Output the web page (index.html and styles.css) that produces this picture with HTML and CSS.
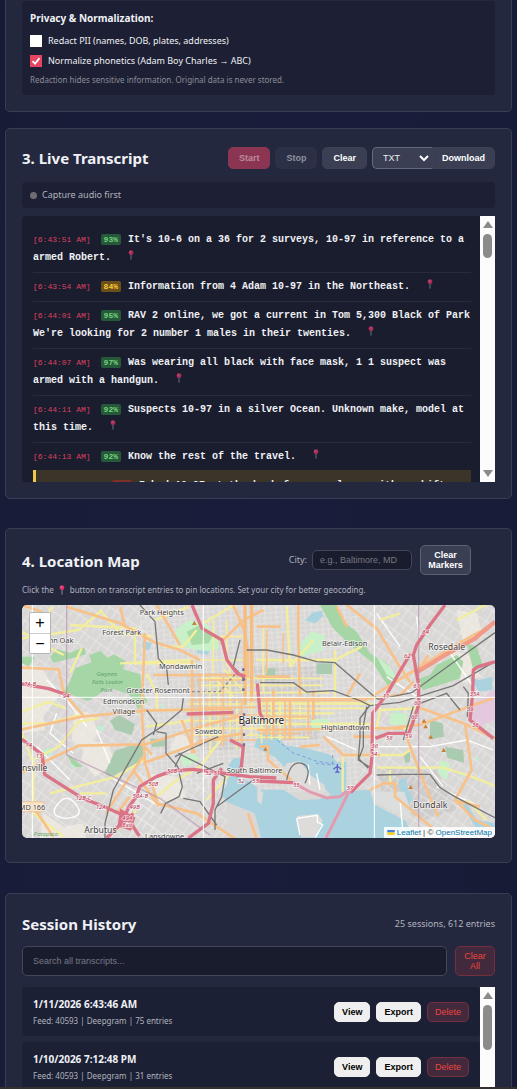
FILE: index.html
```html
<!DOCTYPE html>
<html lang="en">
<head>
<meta charset="utf-8">
<meta name="viewport" content="width=device-width, initial-scale=1">
<title>Live Transcript</title>
<link rel="stylesheet" href="styles.css">
</head>
<body>
<svg class="defs" aria-hidden="true">
  <symbol id="pin" viewBox="0 0 8 12">
    <path d="M4 5v6.5" stroke="#9aa3b5" stroke-width="1" fill="none"/>
    <circle cx="4" cy="3.2" r="2.9" fill="#e0316a"/>
    <circle cx="3.2" cy="2.3" r=".8" fill="#f58bb0"/>
  </symbol>
</svg>
<main class="page">
  <section class="card card-first">
    <div class="panel privacy">
      <h3 class="privacy-title">Privacy &amp; Normalization:</h3>
      <label class="check"><input type="checkbox">Redact PII (names, DOB, plates, addresses)</label>
      <label class="check"><input type="checkbox" checked>Normalize phonetics (Adam Boy Charles → ABC)</label>
      <p class="note">Redaction hides sensitive information. Original data is never stored.</p>
    </div>
  </section>

  <section class="card card-transcript">
    <header class="card-head">
      <h2>3. Live Transcript</h2>
      <div class="tools">
        <button class="btn start" disabled>Start</button>
        <button class="btn stop" disabled>Stop</button>
        <button class="btn">Clear</button>
        <div class="export">
          <div class="select-wrap">
            <select aria-label="Format"><option>TXT</option><option>JSON</option></select>
            <svg class="chevron" viewBox="0 0 10 7"><path d="M1 1l4 4 4-4" fill="none" stroke="#fff" stroke-width="2"/></svg>
          </div>
          <button class="btn download">Download</button>
        </div>
      </div>
    </header>
    <div class="panel status"><span class="dot"></span>Capture audio first</div>
    <div class="scroller transcript">
      <div class="lines">
        <p class="line"><time>[6:43:51 AM]</time><span class="conf">93%</span>It's 10-6 on a 36 for 2 surveys, 10-97 in reference to a armed Robert.<button class="pin" aria-label="Pin"><svg><use href="#pin"/></svg></button></p>
        <p class="line"><time>[6:43:54 AM]</time><span class="conf mid">84%</span>Information from 4 Adam 10-97 in the Northeast.<button class="pin" aria-label="Pin"><svg><use href="#pin"/></svg></button></p>
        <p class="line"><time>[6:44:01 AM]</time><span class="conf">95%</span>RAV 2 online, we got a current in Tom 5,300 Black of Park We're looking for 2 number 1 males in their twenties.<button class="pin" aria-label="Pin"><svg><use href="#pin"/></svg></button></p>
        <p class="line"><time>[6:44:07 AM]</time><span class="conf">97%</span>Was wearing all black with face mask, 1 1 suspect was armed with a handgun.<button class="pin" aria-label="Pin"><svg><use href="#pin"/></svg></button></p>
        <p class="line"><time>[6:44:11 AM]</time><span class="conf">92%</span>Suspects 10-97 in a silver Ocean. Unknown make, model at this time.<button class="pin" aria-label="Pin"><svg><use href="#pin"/></svg></button></p>
        <p class="line last"><time>[6:44:13 AM]</time><span class="conf">92%</span>Know the rest of the travel.<button class="pin" aria-label="Pin"><svg><use href="#pin"/></svg></button></p>
        <p class="line flagged"><time>[6:44:18 AM]</time><span class="conf low">68%</span>I had 10-97 at the back for you please with a shift</p>
      </div>
      <div class="bar" aria-hidden="true"><i class="up"></i><i class="thumb"></i><i class="down"></i></div>
    </div>
  </section>

  <section class="card card-map">
    <header class="card-head map-head">
      <h2>4. Location Map</h2>
      <div class="map-tools">
        <label for="city">City:</label>
        <input id="city" class="field" type="text" placeholder="e.g., Baltimore, MD">
        <button class="btn outlined">Clear<br>Markers</button>
      </div>
    </header>
    <p class="hint">Click the <svg class="hint-pin"><use href="#pin"/></svg> button on transcript entries to pin locations. Set your city for better geocoding.</p>
    <div class="map">
      <svg class="map-canvas" viewBox="66 15 1419 699" preserveAspectRatio="xMidYMid slice" role="img" aria-label="Map of Baltimore">
        <defs>
          <pattern id="streets" width="34" height="30" patternUnits="userSpaceOnUse" patternTransform="rotate(-4)">
            <path d="M0 5H34M0 19H20M8 0V30M25 5V30" stroke="#ecebe9" stroke-width="2" fill="none"/>
          </pattern>
          <pattern id="diag" width="42" height="36" patternUnits="userSpaceOnUse" patternTransform="rotate(35)">
            <path d="M0 8H42M12 0V36M30 8V28" stroke="#eeedeb" stroke-width="2" fill="none"/>
          </pattern>
        </defs>
        <rect x="0" y="0" width="1600" height="800" fill="#dad8d6"/>
        <g fill="#ebe7df">
          <path d="M66 190l60 10 50 90-50 60-60-20zM225 330l50 10 20 60-40 50-40-30zM66 330l60 0 10 60-70 10zM255 420l70 10 20 60-60 40-40-50zM530 400l60 20-20 40-60-10zM1360 150l60 20 20 60-50 20-40-40zM1370 30l60 10 20 70-60 20zM450 520l80 10 30 60-80 20zM130 640l60 40 60-10 10 44H120z"/>
        </g>
        <g fill="#cfcdcc"><path d="M560 220h170v230H600zM760 200h200v220H790zM1130 500l180 10 60 120-100 30-120-60z"/></g>
        <rect x="66" y="15" width="400" height="700" fill="url(#diag)"/>
        <rect x="420" y="15" width="660" height="560" fill="url(#streets)"/>
        <rect x="1080" y="15" width="410" height="700" fill="url(#diag)"/>
        <rect x="380" y="520" width="300" height="200" fill="url(#diag)"/>
        <g fill="#a6d6a6">
          <path d="M205 255l20-50 50-18-8-22 35-12 20 20 20-10 35 20-8 25 52 15 4 50 18 30-28 25-28-45-60-20-62 40-55-20-20-5z"/>
          <path d="M150 170l20-22 40 10 42-16 6 20-38 12-60 14zM66 170l40 0-20 30-20-10zM200 460l50 40-30 2z"/>
          <path d="M960 15h50l20 50 40 30 40 65 50 30 40 50-36 18-46-70-70-55-50-50z"/>
          <path d="M1260 235l30-10 20-30 60-30 20 20-10 50-60 20-50 15-20-20z"/>
          <path d="M1400 130l30 10 20 60-30 10z"/>
        </g>
        <g fill="#c8f1c9">
          <path d="M530 85l40-25 50 12 35 45 2 30-50 10-60-18-20-30z"/>
          <path d="M890 145l45-52 40 14-6 45-65 18zM935 357h52v36h-52zM1130 170l40 30 30 45-40-20zM540 470l40-10 20 20-50 20zM1170 340h50v34h-50zM1320 480l30 10-10 50-26-20z"/>
        </g>
        <path d="M560 95l40-20 40 30-14 25-50 5z" fill="#a9dba8"/>
        <g fill="#aacbaf">
          <path d="M330 362l28-17 47 28-10 32-50-15zM345 452l70-22 24 12-18 42-90 48-17-12zM451 415l44 4v20l-40 2zM950 190h46v32h-46zM798 205h28v36h-28zM1290 360l38 10 4 40-42 8zM1335 440l55 10 2 38-50-14zM1210 460l20-4v30l-14 2z"/>
        </g>
        <g fill="#bdf0d2"><path d="M130 450l20-8 4 20-18 6zM292 376l20 4-2 12-18-4zM210 490l16 8-8 10zM1180 330l20 4-4 12zM1370 520l20-6 4 16zM1420 470l16 4-4 10zM1250 110l26 6-10 12zM620 350l16 4-6 12zM480 310l14 6-6 14z"/></g>
        <path d="M1420 310l65-40v90l-50 20-20-30z" fill="#e3c8de"/>
        <g fill="#aad3df">
          <path d="M686 495l14-20 22-2 10 30-16 40 26-2 38 28 70 0 50 32 60-4 42-16 38-8 70-4 12 44 96 50 18 51H784l-20-74-84-34-16-24 18-32z"/>
          <path d="M775 398l50 2 30 36 70 10 66 18 20 22 28 0v90l-40 14-30-30-50-24-66-36-30-30-60-30z"/>
          <path d="M916 62l20-24 30-6 4 16-24 22zM428 122l28 8-10 22-20-10zM590 150l40 4-8 10-30-4zM1407 230l30 10 40-10v40l-40 5zM1196 540l22-6 8 40 14 20-20 30-16-30zM1380 600l20 10 30 50 55 10v20l-60-10z"/>
        </g>
        <path d="M1125 605l96 50 12-20-20-60-88 0z" fill="#dcdddd"/>
        <g fill="#dedcda"><path d="M860 490l40-6 30 40 44 32 2 20-20 10-60-26-60-10zM890 648l64-6 14 20-24 50h-40zM772 560l18 20-6 34-12-10z"/></g>
        <path d="M890 655l62-9v20l16 8-22 38M890 655l10 50M925 494l4 60M950 520l10 50" fill="none" stroke="#fff" stroke-width="4"/>
        <path d="M818 410l60 48 70 25 60 10M998 465v30l-50-5" fill="none" stroke="#6a80dd" stroke-width="2" stroke-dasharray="10 8"/>
        <g fill="none" stroke="#fff" stroke-width="4">
          <path d="M140 240l60 60 60 80M170 340l-20 60 70 60M290 390l40 100M175 610q25-30 50 0t0 40-50 0 0-40M110 440l100 100M330 530l150 90M1130 40l70 100M1250 50l10 80M1130 440h160l110-20 80 30M1260 470l70 90M1160 230l90 60M1310 560l130 60M1200 600l10 110M980 410l90 40M1330 130l90 130"/>
        </g>
        <g fill="none" stroke="#f3ee9d" stroke-width="7">
          <path d="M66 95l75 45 50 25M66 115l170-25 70-60M130 55l30-35M210 75l200 10M210 220l35-75M66 400l30 80 80-40 60-75 60-10M66 335l80-30 50 20M100 480v160l90 70M66 370h80l90-25M150 580l200-50 90-55M300 30l60 70 100 10M405 110v80h180M360 190l220-10M440 220l30 60v50h120M440 380l140-20M490 140l60 0 40-50M610 70l100-60M466 60l100-40M470 590l60-50 70-40 70-90M240 580l80 0M620 600l80-90M350 690l60-60"/>
          <path d="M771 180h240M1005 150v150M1005 180l80-40M860 20l10 180M940 120l-70 80M771 340h230M780 372h330M790 310h320M840 290v130M870 290v130M1028 470v105M1028 465l110 0 70 0 30-20M1130 503l200 0 80 25 75 30M1140 330l110-5-20 60-100 0zM1370 60l115-60M1170 510v45M1400 600l60 60M1140 60l60-20"/>
        </g>
        <g stroke="#f6ec9b" stroke-width="5" fill="none">
          <path d="M600 235h370M600 256h370M610 278h380M560 312h560M570 362h230M570 385h230M575 405h210M780 325h320M770 355h160M770 412h160M630 240v220M655 230v200M690 200v200M710 300v150M755 210v200M785 300v130M815 290v130M900 300v60M640 230l60 60M670 205l70 80M640 60v160M680 60v140M790 80v200M600 180h130M640 110h90"/>
        </g>
        <g fill="none" stroke="#f7c189" stroke-width="5">
          <path d="M570 300h210M590 322h180M575 345h200M600 420h170M590 240h150M600 220v220M670 230v210M725 300v130M800 290v130M855 300v120M925 300v110M780 302h320M780 350h150M780 400h120M800 90v130M850 100v90"/>
        </g>
        <g fill="none" stroke="#f7c189" stroke-width="8">
          <path d="M66 203l110 5 15 70 60 70M66 388l180-38 190-18 260-6M66 517l170-80 190-4 30 30M200 20l160 50 100 55 80 25 60 30M360 20l15 60M435 100l-10 230 10 160 20 60 20 70M430 435l190-60 110-30M430 490l190-70 110-20M470 15l70 120M460 225h280M576 180v280M545 360l40 100M318 640l110-170M100 620l60 90M400 510l70 100 120 30 120 80M350 640l40-50M700 15l34 80 10 60 0 80M660 130l70-70 60-30"/>
          <path d="M771 80h70M895 15v100l5 180M1010 20l30 60M1040 15l90 70 60 100 40 60M771 295h350l80-10 40-40M771 390l400-6 90-10 120-45 100-35M1130 385l80 0M820 270v140M940 270v90M771 230h100M780 440l24 0v40l70 60M1110 570l40-20 35 0 0 40 60 50 70 60M1215 400l50 130 50 120M1250 320l140 50 95 45M1395 370l20 140-50 90 60 60 60 30M1485 70l-110 60-130 80-130 80M870 300v120M970 410l60 55h110M900 440l60-5M1060 410l70 0M1360 600l80 20M1245 225l40-60"/>
          <path d="M744 640l25 74M66 15l60 20M1080 220l-40 70"/>
        </g>
        <path d="M735 15v300M755 15v290" stroke="#f5bd80" stroke-width="10" fill="none"/>
        <path d="M1245 220l90-55 90-50 60-50" fill="none" stroke="#ef9b88" stroke-width="13"/>
        <g fill="none" stroke="#777" stroke-width="4">
          <path d="M420 15l45 50 10 110 25 30 5 50M550 295l-5 35-60 50-60 40-85 150-25 100v50M440 330l30 40-10 35M470 395l28 5v60l35 40 14 60-10 30-40 20-15 30M535 460l60 30 80 40-10 60-20 40v60M525 470l40-20 90-40M525 500l20-40M550 595l50 10 50 70M720 120l-20 80 35 40M590 520l80-30M650 620l110-80"/>
          <path d="M740 150l60 0 80 15 70 20 55 3 110 95 20 15 100-20 110-80 140-100M780 248h100l40 28 80-4 80 30 30 15 90-10 160-50 120-70M1110 315l-30 40 0 60-5 60 30 30M1100 320l-10 60 0 60-15 40 40 25M1130 525l80-2 80 0 30 40 50 30 115 60M1240 320l-30 100M1260 310l80-30 40 50M860 540q12-60 45-50t10 60M1390 260l15 20-3 70"/>
        </g>
        <path d="M560 275h100l60-70" stroke="#8c8c8c" stroke-width="4" stroke-dasharray="8 8" fill="none"/>
        <path d="M200 15v450l280 130 150 110M1256 15v700" stroke="#b488ad" stroke-width="4" opacity=".6" fill="none"/>
        <g fill="none" stroke="#db7487" stroke-width="10" stroke-linejoin="round">
          <path d="M576 15l30 70 60 35 15 60 30 40 25 10M66 252l80 14 65 22M560 342l140-5M66 418l60 45 8 60 110 70 70 28 50 22 24 20 30 45M320 714l45-44 22-50 22-30 10-30 50-30 50-18 60-4 110 14 60 8 80 4M690 420l40 20-6 60-16 30M665 505l-25 35 0 70-15 60-60 44M400 640l-40 40"/>
          <path d="M1335 15l-45 60-40 60-10 30 16 90 0 60-20 60-10 25-60 0-40 15M1232 160l-30 50-40 70-44 60-2 130-6 50-58 58M880 548l-110-5M1485 185l-50 15-15 10-2 70-8 80 70 55M772 250l8 90 10 20"/>
        </g>
        <path d="M880 548l50 28 50 18 40-4 35-28M1050 568l-36 74-36 72" fill="none" stroke="#e39bae" stroke-width="9"/>
        <path d="M365 635l34 20-10 30-30-10z" fill="none" stroke="#db7487" stroke-width="12"/>
        <path d="M730 205v90M732 340v100" stroke="#6a6e9e" stroke-width="7" stroke-dasharray="8 22" fill="none"/>
        <g fill="#c87f3a"><path d="M583 62l7 13h-14zM1272 356l7 12h-14zM1277 373l7 12h-14zM1292 404l7 12h-14zM1331 444l7 12h-14zM1232 555l7 12h-14zM796 440l6 12h-12z"/></g>
        <path d="M1012 492v26M1000 508l12-9 12 9M1006 518l6-4 6 4" stroke="#6a63c9" stroke-width="4" fill="none"/>
        <path d="M97 15v700M610 15v700M1123 15v700M66 292h1420" stroke="#fff" stroke-width="3" fill="none"/>
        <rect x="60" y="605" width="72" height="30" rx="4" fill="#fbe0c0" stroke="#e5b88b" stroke-width="2"/>
        <g class="map-label minor" text-anchor="middle">
          <text x="485" y="46">Park Heights</text>
          <text x="365" y="104">Forest Park</text>
          <text x="183" y="130">nn Oak</text>
          <text x="542" y="206">Mondawmin</text>
          <text x="474" y="279">Greater Rosemont</text>
          <text x="371" y="313">Edmondson</text>
          <text x="372" y="342">Village</text>
          <text x="626" y="401">Sowebo</text>
          <text x="764" y="519">South Baltimore</text>
          <text x="1034" y="139">Belair-Edison</text>
          <text x="1036" y="389">Highlandtown</text>
          <text x="494" y="716">Lansdowne</text>
          <text x="96" y="629">MD 166</text>
        </g>
        <g class="map-label town" text-anchor="middle">
          <text x="104" y="512">nsville</text>
          <text x="301" y="698">Arbutus</text>
          <text x="1340" y="151">Rosedale</text>
          <text x="1291" y="624">Dundalk</text>
        </g>
        <text class="map-label city" x="784" y="371" text-anchor="middle">Baltimore</text>
        <g class="map-label park" text-anchor="middle">
          <text x="320" y="228">Gwynns</text><text x="322" y="252">Falls Leakin</text><text x="320" y="276">Park</text><text x="138" y="708">Patapsco</text>
        </g>
        <g class="map-label exit" text-anchor="middle">
          <text x="90" y="259">7A-B</text><text x="86" y="440">14</text><text x="117" y="474">13</text><text x="250" y="600">12B-C</text><text x="302" y="628">12A</text><text x="382" y="660">49A</text><text x="382" y="682">Exit</text><text x="404" y="626">49B</text><text x="421" y="595">50A-B</text><text x="460" y="559">50B</text><text x="524" y="519">50B-A</text><text x="638" y="526">52 51</text><text x="724" y="548">52</text><text x="767" y="550">55</text><text x="889" y="560">55</text><text x="1050" y="570">57</text><text x="1124" y="445">36</text><text x="1122" y="467">54</text><text x="1168" y="419">58</text><text x="1226" y="415">59</text><text x="1243" y="357">60</text><text x="1252" y="316">60</text><text x="1250" y="263">61</text><text x="1222" y="174">62</text><text x="1277" y="103">64</text><text x="1158" y="294">11</text><text x="1424" y="288">35A</text><text x="1411" y="332">39</text><text x="1426" y="380">38</text><text x="198" y="294">94</text>
        </g>
      </svg>
      <div class="zoomer"><button aria-label="Zoom in">+</button><button aria-label="Zoom out">−</button></div>
      <div class="credit"><svg class="flag" viewBox="0 0 12 8"><path fill="#4C7BE1" d="M0 0h12v4H0z"/><path fill="#FFD500" d="M0 4h12v3H0z"/><path fill="#E0BC00" d="M0 7h12v1H0z"/></svg> <a href="#leaflet">Leaflet</a> | © <a href="#osm">OpenStreetMap</a></div>
    </div>
  </section>

  <section class="card card-history">
    <header class="card-head history-head">
      <h2>Session History</h2>
      <span class="count">25 sessions, 612 entries</span>
    </header>
    <div class="search">
      <input class="field" type="search" aria-label="Search" placeholder="Search all transcripts...">
      <button class="btn danger">Clear<br>All</button>
    </div>
    <div class="scroller history">
      <div class="sessions">
        <article class="session">
          <div class="session-info"><h3>1/11/2026 6:43:46 AM</h3><p>Feed: 40593 | Deepgram | 75 entries</p></div>
          <div class="session-tools"><button class="btn light">View</button><button class="btn light">Export</button><button class="btn danger">Delete</button></div>
        </article>
        <article class="session">
          <div class="session-info"><h3>1/10/2026 7:12:48 PM</h3><p>Feed: 40593 | Deepgram | 31 entries</p></div>
          <div class="session-tools"><button class="btn light">View</button><button class="btn light">Export</button><button class="btn danger">Delete</button></div>
        </article>
      </div>
      <div class="bar tall" aria-hidden="true"><i class="up"></i><i class="thumb"></i><i class="down"></i></div>
    </div>
  </section>
</main>
<div class="edge"></div>
</body>
</html>
```
FILE: styles.css
```css
* { box-sizing: border-box; }
body {
  margin: 0;
  height: 100vh;
  overflow: hidden;
  background: linear-gradient(100deg, #171c36, #191d3b 50%, #161b35);
  color: #f0f1f5;
  font: 9px/12px "Noto Sans", "Open Sans", sans-serif;
}
h2, h3, p { margin: 0; }
button, input, select { font: 9px/10px "Liberation Sans", Arial, sans-serif; }
.defs { position: absolute; width: 0; height: 0; }

.page { padding: 0 5px; }
.card {
  padding: 16px;
  background: #24283f;
  border: 1px solid #3a3e54;
  border-radius: 5px;
}
.card-first { border-top: 0; border-radius: 0 0 5px 5px; padding-top: 1px; margin-bottom: 16px; }
.card-transcript { margin-bottom: 29px; }
.card-map { padding-bottom: 24px; margin-bottom: 30px; }
.panel { background: #1d2034; border-radius: 4px; }

.privacy { padding: 10px 8px; height: 94px; }
.privacy-title { font-size: 10px; line-height: 14px; margin-bottom: 9px; }
.check { display: flex; align-items: center; gap: 6px; height: 14px; margin-bottom: 6px; }
.check input {
  appearance: none;
  width: 12px;
  height: 12px;
  margin: 0;
  background: #fff;
}
.check input:checked {
  background: #e64562 url("data:image/svg+xml,%3Csvg xmlns='http://www.w3.org/2000/svg' viewBox='0 0 12 12'%3E%3Cpath d='M2.5 6.2l2.5 2.5 4.5-5.6' fill='none' stroke='white' stroke-width='1.8'/%3E%3C/svg%3E");
}
.note { font-size: 8px; line-height: 12px; color: #8b8c99; }

.card-head { display: flex; align-items: center; justify-content: space-between; }
.card-head h2 { font-size: 15px; line-height: 22px; }
.card-transcript .card-head { height: 26px; margin-bottom: 11px; }
.tools { display: flex; gap: 5px; }
.btn {
  padding: 0 10px;
  height: 22px;
  border: 1px solid #3d4156;
  border-radius: 5px;
  background: #3b3f54;
  color: #fff;
  font-weight: bold;
}
.btn.start { background: #8c3552; border-color: #8c3552; color: #bd8b9e; }
.btn.stop { background: #2c3047; border-color: #2c3047; color: #8d90a0; }
.export { display: flex; }
.select-wrap { position: relative; }
.select-wrap select {
  appearance: none;
  width: 60px;
  height: 22px;
  padding: 0 10px;
  border: 1px solid #656a7e;
  border-right: 0;
  border-radius: 5px 0 0 5px;
  background: #3b3f54;
  color: #f0f1f5;
}
.chevron { position: absolute; right: 3px; top: 8px; width: 10px; height: 7px; }
.btn.download { padding: 0 9px; border-radius: 0 5px 5px 0; }

.status { display: flex; align-items: center; gap: 5px; height: 26px; padding: 0 8px; margin-bottom: 8px; color: #b1b3be; }
.dot { width: 7px; height: 7px; border-radius: 50%; background: #6d6d70; }

.scroller { display: flex; overflow: hidden; }
.transcript { height: 266px; background: #1a1d2e; border-radius: 4px 0 0 4px; }
.lines { flex: 1; padding: 10px 9px 10px 11px; }
.line {
  padding: 5px 0;
  border-bottom: 1px solid #282b3c;
  font: bold 10px/18px "Liberation Mono", "Courier New", monospace;
}
.line time { margin-right: 10px; font-size: 8px; font-weight: normal; color: #dc4060; }
.conf {
  margin-right: 7px;
  padding: 1px 3px;
  border-radius: 2px;
  background: #26583a;
  color: #74d37c;
  font-size: 8px;
}
.conf.mid { background: #6b501a; color: #ffc935; }
.conf.low { background: #7d3025; color: #e8604e; }
.line.last { padding-bottom: 4px; border-bottom: 0; }
.line.flagged { padding: 7px 0 7px 8px; background: #3b3529; border-left: 3px solid #f2c744; }
.pin { margin: 0 0 0 16px; padding: 0; border: 0; background: none; opacity: .75; line-height: 10px; }
.pin svg { display: block; width: 8px; height: 10px; }

.bar { display: flex; flex-direction: column; align-items: center; width: 15px; padding: 5px 0; background: #fcfcfc; }
.up, .down { border: 5px solid transparent; }
.up { border-top: 0; border-bottom: 7px solid #8a8a8a; }
.down { border-bottom: 0; border-top: 7px solid #8a8a8a; margin-top: auto; }
.thumb { width: 9px; height: 24px; margin-top: 6px; border-radius: 5px; background: #8b8b8b; }
.tall .thumb { height: 45px; }

.map-head { height: 30px; margin-bottom: 9px; }
.map-head h2 { padding-top: 2px; }
.map-tools { display: flex; align-items: center; margin-right: 24px; }
.map-tools label { margin-right: 5px; color: #b1b3be; }
.field {
  min-width: 0;
  border: 1px solid #43475a;
  border-radius: 5px;
  background: #191c2d;
  color: #fff;
}
.field::placeholder { color: #777986; opacity: 1; }
#city { width: 100px; height: 20px; padding: 0 7px; margin-right: 8px; }
.btn.outlined { width: 51px; height: 30px; padding: 0; border-color: #5d6275; }
.hint { display: flex; align-items: center; gap: 4px; margin-bottom: 9px; font-size: 8px; color: #b1b3be; }
.hint-pin { width: 8px; height: 10px; }

.map { position: relative; height: 233px; border-radius: 5px; overflow: hidden; }
.map-canvas { display: block; width: 100%; height: 100%; }
.map-label { font-family: "Noto Sans", sans-serif; fill: #444; stroke: #fff; stroke-opacity: .65; stroke-width: 5px; paint-order: stroke; }
.minor { font-size: 22px; }
.town { font-size: 26px; }
.city { font-size: 30px; fill: #222; }
.park { font-size: 18px; font-style: italic; fill: #5fa36c; stroke-width: 0; }
.exit { font-size: 18px; font-style: italic; fill: #b8324f; }
.zoomer {
  position: absolute;
  left: 7px;
  top: 7px;
  display: grid;
  width: 22px;
  border: 1px solid #b5b5b5;
  border-radius: 2px;
  overflow: hidden;
}
.zoomer button { height: 20px; padding: 0; border: 0; background: #fff; color: #000; font-size: 16px; }
.zoomer button + button { border-top: 1px solid #ccc; }
.credit {
  position: absolute;
  right: 0;
  bottom: 0;
  padding: 0 3px;
  background: rgba(255, 255, 255, .85);
  color: #333;
  font: 8px/11px "Liberation Sans", Arial, sans-serif;
}
.credit a { color: #0078a8; text-decoration: none; }
.flag { width: 8px; height: 5px; }

.history-head { height: 27px; margin-bottom: 9px; }
.count { font-size: 9px; color: #b1b3be; }
.search { display: flex; gap: 8px; margin-bottom: 11px; }
.search .field { flex: 1; height: 30px; padding: 0 10px; }
.btn.danger { background: #42293b; border-color: #74303f; color: #ea4640; font-weight: normal; }
.search .danger { width: 40px; height: 30px; padding: 0; }
.history { height: 240px; }
.sessions { flex: 1; display: flex; flex-direction: column; gap: 6px; }
.session {
  display: flex;
  align-items: center;
  justify-content: space-between;
  height: 49px;
  padding: 0 11px;
  background: #1b2034;
  border-radius: 4px;
}
.session h3 { font-size: 10px; line-height: 14px; margin-bottom: 4px; }
.session p { font-size: 8px; line-height: 12px; color: #b1b3be; }
.session-tools { display: flex; gap: 6px; }
.session-tools .btn { height: 20px; padding: 0 7px; }
.btn.light { background: #efefef; border-color: #efefef; color: #000; }
.edge { position: fixed; left: 0; right: 0; bottom: 0; height: 2px; background: #35302f; }
```
